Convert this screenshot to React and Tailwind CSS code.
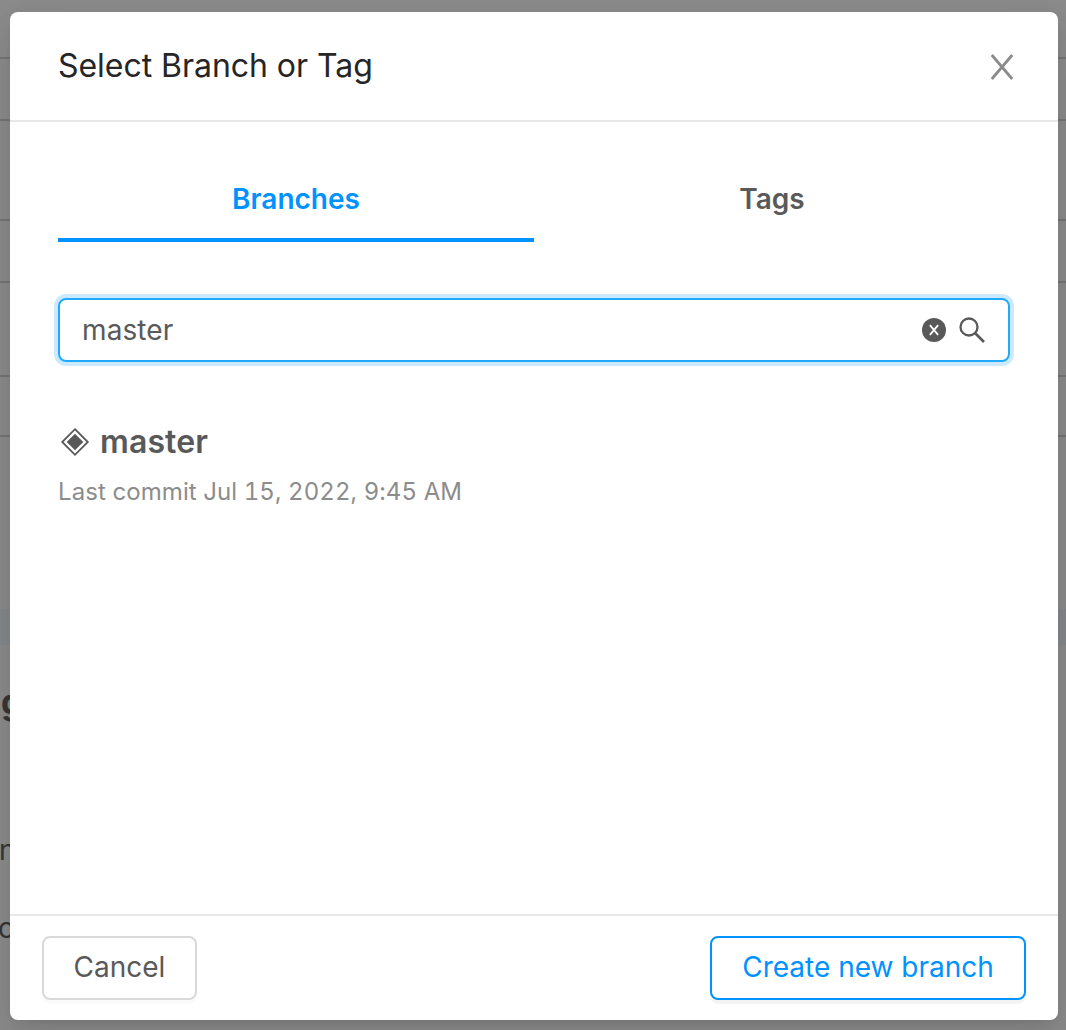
function CloseIcon({ className, strokeWidth }) {
  return (
    <svg className={className} viewBox="0 0 24 26" fill="none" stroke="currentColor" strokeWidth={strokeWidth}>
      <path d="M1.8 1 22.2 25M22.2 1 1.8 25" />
    </svg>
  );
}

function ClearIcon() {
  return (
    <svg className="size-6" viewBox="0 0 24 24" fill="none">
      <circle cx="12" cy="12" r="12" fill="#595959" />
      <path d="M7.9 7.2 16.1 16.8M16.1 7.2 7.9 16.8" stroke="#fff" strokeWidth="1.8" />
    </svg>
  );
}

function SearchIcon() {
  return (
    <svg className="size-7" viewBox="0 0 28 28" fill="none" stroke="#595959">
      <circle cx="11" cy="11" r="8.5" strokeWidth="2.3" />
      <path d="M17 17 26 26" strokeWidth="2.7" />
    </svg>
  );
}

function BranchIcon() {
  return (
    <svg className="size-[30px]" viewBox="0 0 30 30">
      <path d="M15 2.2 27.8 15 15 27.8 2.2 15Z" fill="none" stroke="#595959" strokeWidth="1.8" />
      <path d="M15 6.7 23.3 15 15 23.3 6.7 15Z" fill="#595959" />
    </svg>
  );
}

function Backdrop() {
  return (
    <div className="flex h-full flex-col bg-[#8c8c8c] text-[#363636]">
      <div className="h-[59px] border-b-2 border-[#757575]" />
      <div className="h-[62px] border-b-2 border-[#757575]" />
      <div className="h-[100px] border-b-2 border-[#757575]" />
      <div className="h-[62px] border-b-2 border-[#757575]" />
      <div className="h-[94px] border-b-2 border-[#757575]" />
      <div className="h-[60px] border-b-2 border-[#757575]" />
      <div className="mt-[172px] h-9 bg-[#86898c]" />
      <div className="mt-[37px] h-10 pl-px text-[34px] leading-10 font-bold">g</div>
      <div className="mt-[108px] -ml-px h-10 text-[28px] leading-10">n</div>
      <div className="-ml-0.5 mt-[38px] h-10 text-[28px] leading-10">c</div>
    </div>
  );
}

export default function App() {
  return (
    <div className="relative h-[1030px] w-[1066px] overflow-hidden font-[Inter,sans-serif]">
      <Backdrop />
      <section
        role="dialog"
        className="absolute top-3 left-2.5 flex h-[1008px] w-[1048px] flex-col rounded-lg bg-white shadow-[0_6px_12px_-8px_rgba(0,0,0,0.12),0_12px_32px_0_rgba(0,0,0,0.08),0_18px_56px_16px_rgba(0,0,0,0.05)]"
      >
        <header className="flex h-[110px] items-center justify-between border-b-2 border-[#e8e8e8] px-12">
          <h1 className="text-[32px] leading-[44px] tracking-[-0.04px] text-[#262626]">Select Branch or Tag</h1>
          <button aria-label="Close" className="mr-[-4px] mt-[2px] text-[#8c8c8c]">
            <CloseIcon className="h-[26px] w-6" strokeWidth="2.8" />
          </button>
        </header>

        <main className="flex-1 px-12">
          <div className="mt-9 grid h-[84px] grid-cols-2 text-center text-[28px] leading-[83px] font-semibold">
            <div className="h-[84px] border-b-4 border-[#0092ff] text-[#0092ff]">Branches</div>
            <div className="text-[#595959]">Tags</div>
          </div>

          <div className="mt-14 flex h-16 items-center rounded-lg border-2 border-[#1eabff] pr-[22px] pl-[22px] shadow-[0_0_0_4px_#cce9ff]">
            <span className="flex-1 text-[28px] leading-10 tracking-[0.1px] text-[#595959]">master</span>
            <ClearIcon />
            <span className="ml-3">
              <SearchIcon />
            </span>
          </div>

          <div className="mt-[58px] flex h-11 items-center gap-2.5 pl-0.5">
            <BranchIcon />
            <span className="text-[32px] leading-[44px] font-semibold tracking-[0.1px] text-[#595959]">master</span>
          </div>
          <p className="mt-2.5 text-2xl leading-9 tracking-[0.08px] text-[#8c8c8c] tabular-nums">
            Last commit Jul 15, 2022, 9:45 AM
          </p>
        </main>

        <footer className="flex h-[106px] items-center justify-between border-t-2 border-[#e8e8e8] px-8">
          <button className="h-16 w-[155px] rounded-lg border-2 border-[#d9d9d9] pb-0.5 text-[28px] leading-10 text-[#595959] shadow-[0_4px_0_rgba(0,0,0,0.016)]">
            Cancel
          </button>
          <button className="h-16 w-[316px] rounded-lg border-2 border-[#0092ff] pb-0.5 text-[28px] leading-10 text-[#0092ff] shadow-[0_4px_0_rgba(0,0,0,0.043)]">
            Create new branch
          </button>
        </footer>
      </section>
    </div>
  );
}
